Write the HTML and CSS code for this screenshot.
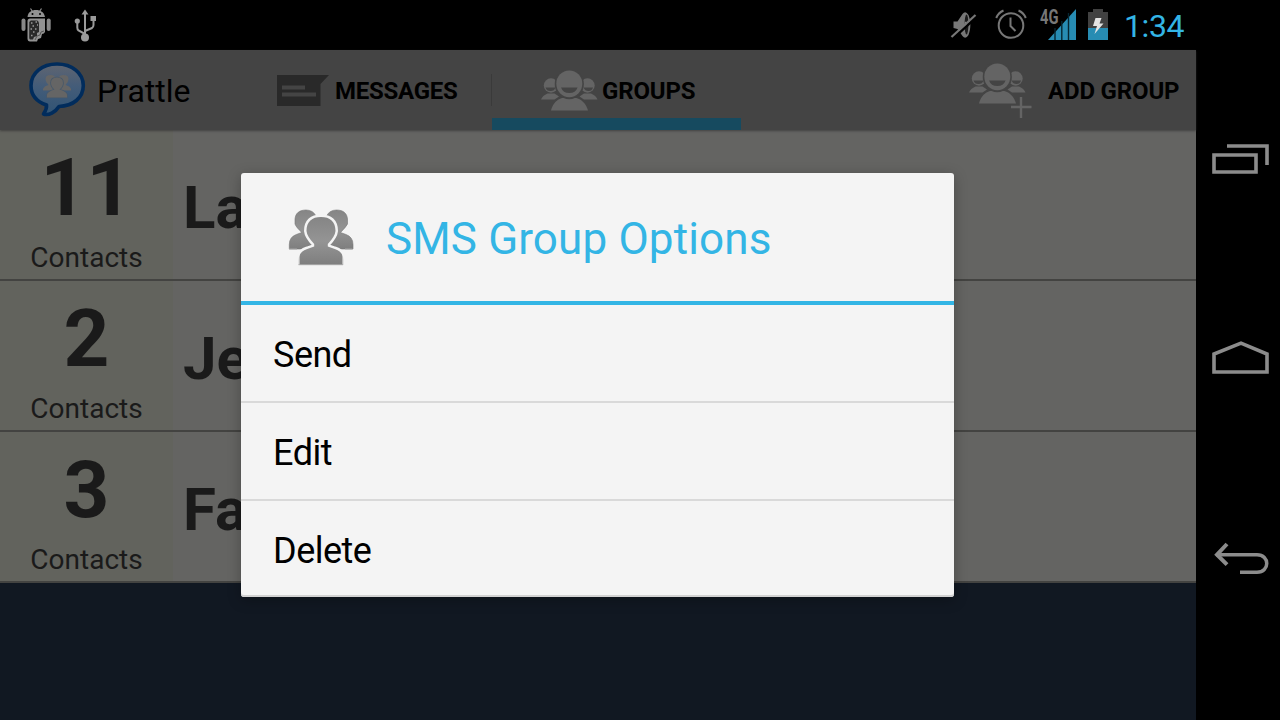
FILE: index.html
```html
<!DOCTYPE html>
<html lang="en">
<head>
<meta charset="utf-8">
<title>Prattle</title>
<link rel="stylesheet" href="styles.css">
</head>
<body>
<svg class="defs" width="0" height="0" aria-hidden="true">
  <defs>
    <symbol id="smileys" viewBox="0 0 58 42">
      <g fill="#646464">
        <circle cx="10" cy="15.500" r="7.200"/><circle cx="46.500" cy="15.500" r="7.200"/>
        <path d="M0 29.500q1.500-4 6.500-6l7 0 4.500 3-4.500 3zM56.500 29.500q-1.500-4-6.500-6l-7 0-4.500 3 4.500 3z"/>
        <path d="M10 40.500C12 33 16 29.500 21 28h14.500c5 1.500 9.500 5.500 11.500 12.500z" />
      </g>
      <path d="M4.500 17.500h10q-1 3.500-5 3.500t-5-3.500zM42.500 17.500h9.500q-1 3.500-4.500 3.500t-5-3.500z" fill="#444"/>
      <ellipse cx="28.300" cy="14" rx="14.600" ry="15.300" fill="#444"/>
      <ellipse cx="28.300" cy="13.800" rx="13" ry="13.400" fill="#646464"/>
      <path d="M20 17.500h16.600q-2 5.500-8.300 5.500T20 17.500z" fill="#444"/>
    </symbol>
  </defs>
</svg>
<div class="screen">
  <div class="device">
    <header class="status">
      <div class="status-left">
        <svg width="30" height="36" viewBox="0 0 30 36">
          <path d="M6.500 10C7 5 10.500 3 15 3S23 5 24 10z" fill="#929292"/>
          <path d="M9.500 1.500l2 3M20.500 1.500l-2 3" stroke="#929292" stroke-width="1.200"/>
          <circle cx="11.500" cy="7" r="1" fill="#000"/><circle cx="19" cy="7" r="1" fill="#000"/>
          <rect x="0.500" y="11.500" width="4" height="12.500" rx="2" fill="#888"/>
          <rect x="25.700" y="11.500" width="4" height="12.500" rx="2" fill="#888"/>
          <path d="M6.500 14q0-2.500 2.500-2.500h15v13.500q-1 2-3 2l-1 4-3 1-1 2.500H9q-2.500 0-2.500-3z" fill="#929292"/>
          <path d="M8.300 15l1.500-1.500h6.500q1.700 1 1.700 3v8.500l-2 1v3l-3 1-1 2.500H9q-.8-.5-.8-2z" fill="#292929"/>
          <path d="M10 16h1.500m3-1H16m-4.500 4H13m3-1h1M9.500 22H11m3 0h1.500M12 25h1.500M10 28.500h1.500" stroke="#999" stroke-width="1.300"/>
          <path d="M14 33l2-4 3-1 1-3 3-1" fill="none" stroke="#555" stroke-width="1"/>
        </svg>
        <svg width="24" height="34" viewBox="0 0 24 34">
          <path d="M11 29V5M11 25L4.500 21.500q-1.200-1-1.200-3v-5M11 22l7-3q1.500-1 1.500-3V9" fill="none" stroke="#9a9a9a" stroke-width="2"/>
          <path d="M11 .5l3.500 5h-7z" fill="#9a9a9a"/>
          <circle cx="11" cy="28.500" r="4" fill="#9a9a9a"/><circle cx="3.300" cy="12" r="2.600" fill="#9a9a9a"/>
          <rect x="16.500" y="7" width="5.500" height="5" fill="#9a9a9a"/>
        </svg>
      </div>
      <div class="status-right">
        <svg class="mute" width="28" height="30" viewBox="0 0 28 30">
          <path d="M3.500 11.500h4L12.500 4q3-4 6 1c2.500 7 2.500 13 0 20q-3 5-6 1l-5-7-4-1z" fill="#777"/>
          <ellipse cx="16.500" cy="14.500" rx="1.900" ry="10" fill="#1a1a1a"/>
          <ellipse cx="15.700" cy="14.500" rx="1.200" ry="3" fill="#888"/>
          <path d="M3 28.500L27 6.500" stroke="#000" stroke-width="2.400"/><path d="M1.500 27L25.500 5" stroke="#777" stroke-width="2.200"/>
        </svg>
        <svg class="alarm" width="32" height="30" viewBox="0 0 32 30">
          <g fill="none" stroke="#777" stroke-width="2"><circle cx="16" cy="16.500" r="12.300"/><path d="M15.500 8.500V17l5 5M1.200 9Q3.500 3.500 8.500 1.500M30.800 9Q28.500 3.500 23.500 1.500"/></g>
        </svg>
        <svg class="signal" width="37" height="34" viewBox="0 0 37 34">
          <path d="M8 32L36 1v31z" fill="#278cb3"/>
          <path d="M15 20v12M21.800 13v19M28.500 5v27" stroke="#062631" stroke-width="1.400"/>
          <text x="0" y="15.500" class="network" textLength="18.500" lengthAdjust="spacingAndGlyphs">4G</text>
        </svg>
        <svg class="battery" width="20" height="31" viewBox="0 0 20 31">
          <path d="M5 0h10v3h5v16H0V3h5z" fill="#414141"/><path d="M0 19h20v12H0z" fill="#278cb3"/>
          <path d="M7.500 9h6l-2 5.500h4L6.500 25l2.500-8H5z" fill="#e4e4e4"/>
        </svg>
        <span class="clock">1:34</span>
      </div>
    </header>
    <nav class="bar">
      <svg class="logo" width="58" height="58" viewBox="0 0 58 58">
        <defs><linearGradient id="bubble" x2="0" y2="1"><stop offset="0" stop-color="#606570"/><stop offset=".45" stop-color="#435c79"/><stop offset="1" stop-color="#315474"/></linearGradient></defs>
        <path d="M29 3C14 3 3 12 3 24.500c0 9 5 16 15.500 19.500.5 4-1 6-3 9 5 2 12-2 15.500-7.500C45 45 55.300 37 55.300 24.500 55.300 12 44 3 29 3z" fill="url(#bubble)" stroke="#012c5c" stroke-width="3.600" stroke-linejoin="round"/>
        <g fill="#656565">
          <path d="M15 29.500v-1.500q1-3 5.500-4-3-3-3-6 0-4 5-4 4 0 5 3v12.500zM43 29.500v-1.500q-1-3-5.500-4 3-3 3-6 0-4-5-4-4 0-5 3v12.500z"/>
          <path d="M19 36.500v-3q1-3 7.500-5-3.500-3-3.500-6.500 0-5.500 6-5.500t6 5.500q0 3.500-3.500 6.500 6.500 2 7.500 5v3z" stroke="#46586b" stroke-width="1.600" paint-order="stroke"/>
        </g>
      </svg>
      <span class="app-name">Prattle</span>
      <div class="tab tab-messages">
        <svg width="52" height="32" viewBox="0 0 52 32"><path d="M0 0h52l-8.500 9v22H0z" fill="#292929"/><path d="M5 12.500h23M5 19.500h34" stroke="#444" stroke-width="4"/></svg>
        <span class="label messages">MESSAGES</span>
      </div>
      <div class="tab tab-groups">
        <svg width="58" height="42"><use href="#smileys"/></svg>
        <span class="label groups">GROUPS</span>
      </div>
      <div class="action">
        <svg width="64" height="56" viewBox="0 0 64 56"><use href="#smileys" width="58" height="42"/><path d="M52 33v22M41 44h21" stroke="#444" stroke-width="5"/><path d="M52 34v21M42 44h20.500" stroke="#646464" stroke-width="2.400"/></svg>
        <span class="label add">ADD GROUP</span>
      </div>
    </nav>
    <main class="list">
      <section class="row"><div class="count"><b>11</b><span>Contacts</span></div><div class="name">La</div></section>
      <section class="row"><div class="count"><b>2</b><span>Contacts</span></div><div class="name">Je</div></section>
      <section class="row"><div class="count"><b>3</b><span>Contacts</span></div><div class="name">Fa</div></section>
    </main>
    <div class="dialog">
      <div class="dialog-head">
        <svg width="66" height="58" viewBox="0 0 66 58">
          <defs><linearGradient id="people" x2="0" y2="1"><stop offset="0" stop-color="#858585"/><stop offset=".5" stop-color="#949494"/><stop offset="1" stop-color="#7e7e7e"/></linearGradient></defs>
          <g fill="url(#people)" stroke="#777" stroke-width=".6">
            <path id="side" d="M1.300 40v-4.500q0-7.500 7-10l5.500-2Q8 18 7 15V10C7.500 4 11.500 1 18 1q7 0 10 6v33z"/>
            <path d="M65 40v-4.500q0-7.500-7-10l-5.500-2Q58 18 59.500 15V10C59 4 55 1 48.500 1q-7 0-10 6v33z"/>
          </g>
          <path id="front" d="M10.700 56v-5q0-8.500 8.500-11l7-2.500v-2.500Q19 27.500 18.500 22C18.500 12.500 24 8 33 8s14.500 4.500 14.500 14q-.5 5.500-7.700 13v2.500l7 2.500q8.500 2.500 8.500 11v5z" fill="url(#people)" stroke="#f4f4f4" stroke-width="5" paint-order="stroke" stroke-linejoin="round"/>
          <path d="M8 42.500h3v13.500M58 42.500h-3v13.500" fill="none" stroke="#f4f4f4" stroke-width="1"/>
          <path d="M10.500 55.700H55M1 40h8M57 40h7.500" stroke="#aaa" stroke-width="1"/>
        </svg>
        <h1><span>SMS Group Options</span></h1>
      </div>
      <div class="option"><span class="send">Send</span></div>
      <div class="option"><span class="edit">Edit</span></div>
      <div class="option"><span class="delete">Delete</span></div>
    </div>
  </div>
  <aside class="nav">
    <svg width="60" height="34" viewBox="0 0 60 34" fill="none" stroke="#8c8c8c" stroke-width="3.600"><path d="M3 12h42v17H3zM16 3h40v19"/></svg>
    <svg width="60" height="36" viewBox="0 0 60 36" fill="none" stroke="#8c8c8c" stroke-width="3.600"><path d="M3 32V14L30 3.200 56 14v18z"/></svg>
    <svg width="60" height="34" viewBox="0 0 60 34" fill="none" stroke="#8c8c8c" stroke-width="4"><path d="M5 13.700h41c13 0 13 17.500 0 17.500H29" stroke-width="3.500"/><path d="M16 3L6 13.700l10 10"/></svg>
  </aside>
</div>
</body>
</html>
```
FILE: styles.css
```css
* { box-sizing: border-box; }
body { margin: 0; background: #000; font-family: Roboto, "Noto Sans", sans-serif; overflow: hidden; }
svg { display: block; flex: none; overflow: visible; }
.defs { position: absolute; }
.screen { display: flex; width: 1280px; height: 720px; }
.device { position: relative; display: flex; flex-direction: column; width: 1196px; height: 720px; background: #111822; }

.status { display: flex; justify-content: space-between; height: 50px; background: #000; }
.status-left { display: flex; gap: 23px; padding: 7px 0 0 21px; }
.status-left svg + svg { margin-top: 2px; }
.status-right { display: flex; align-items: flex-start; width: 246px; }
.mute { margin: 10px 17px 0 0; }
.alarm { margin: 9px 13px 0 0; }
.signal { margin: 8px 11px 0 0; }
.battery { margin: 9px 16px 0 0; }
.network { font: bold 20px Roboto, sans-serif; fill: #777; }
.clock { font-size: 32px; line-height: 52px; letter-spacing: -.4px; color: #33b5e5; white-space: nowrap; }

.bar { position: relative; z-index: 1; display: flex; align-items: center; height: 80px; background: #444; box-shadow: 0 1px 2px #333333b0; }
.logo { margin: 0 0 0 28px; }
.app-name { width: 180px; padding: 2px 0 0 11px; font-size: 32px; color: #000; white-space: nowrap; }
.tab { display: flex; align-items: center; height: 80px; }
.tab-messages { width: 226px; padding-left: 11px; background: linear-gradient(#3a3a3a, #3a3a3a) 100% 24px / 1px 32px no-repeat; }
.tab-messages svg { margin: 1px 6px 0 0; }
.tab-groups { width: 249px; padding-left: 49px; border-bottom: 12px solid #164a5f; }
.tab-groups svg { margin-top: 13px; }
.tab-groups .label { padding: 13px 0 0 3px; }
.label { font-size: 24px; font-weight: 700; line-height: 28px; letter-spacing: -.17px; color: #000; white-space: nowrap; }
.messages, .add { padding-top: 2px; }
.messages { letter-spacing: -.25px; }
.action { display: flex; align-items: center; margin-left: 228px; }
.action svg { margin: 1px 15px 0 0; }

.row { display: flex; height: 151px; border-bottom: 2px solid #434341; background: #646462; color: #1a1a1a; }
.count { display: flex; flex-direction: column; align-items: center; width: 173px; padding-top: 8px; background: #62635d; }
.count b { font-size: 80px; line-height: 100px; }
.count span { font-size: 28px; line-height: 39px; }
.name { display: flex; align-items: center; padding: 6px 0 0 10px; font-size: 60px; font-weight: 700; }

.dialog { position: absolute; left: 241px; top: 173px; z-index: 2; width: 713px; height: 424px; background: #f4f4f4; border-radius: 3px; box-shadow: 0 3px 14px #00000045, inset 0 -2px #d2d2d2; color: #000; }
.dialog-head { display: flex; align-items: center; height: 132px; padding-left: 47px; border-bottom: 4px solid #33b5e5; }
.dialog-head svg { margin-top: 1px; }
.dialog-head h1 { margin: 0 0 0 32px; padding-top: 4px; font-size: 44px; font-weight: 400; line-height: 52px; letter-spacing: .14px; color: #33b5e5; white-space: nowrap; }
.option { display: flex; align-items: center; height: 98px; padding: 3px 0 0 32px; border-bottom: 2px solid #d9d9d9; font-size: 36px; letter-spacing: -.5px; }
.option:last-child { height: 96px; border-bottom: 0; }

.nav { display: flex; flex-direction: column; width: 84px; padding: 143px 0 0 15px; background: #000; }
.nav svg:nth-child(2) { margin-top: 163px; }
.nav svg:nth-child(3) { margin-top: 165px; }
```
